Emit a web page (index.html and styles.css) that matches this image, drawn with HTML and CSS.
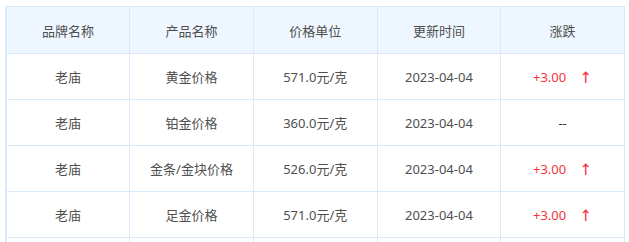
FILE: index.html
```html
<!DOCTYPE html>
<html lang="zh-CN">
<head>
<meta charset="utf-8">
<link rel="stylesheet" href="styles.css">
</head>
<body>
<table class="price-table">
  <thead>
    <tr><th>品牌名称</th><th>产品名称</th><th>价格单位</th><th>更新时间</th><th>涨跌</th></tr>
  </thead>
  <tbody>
    <tr><td>老庙</td><td>黄金价格</td><td>571.0元/克</td><td>2023-04-04</td><td class="up">+3.00<span class="arrow">↑</span></td></tr>
    <tr><td>老庙</td><td>铂金价格</td><td>360.0元/克</td><td>2023-04-04</td><td class="flat">--</td></tr>
    <tr><td>老庙</td><td>金条/金块价格</td><td>526.0元/克</td><td>2023-04-04</td><td class="up">+3.00<span class="arrow">↑</span></td></tr>
    <tr><td>老庙</td><td>足金价格</td><td>571.0元/克</td><td>2023-04-04</td><td class="up">+3.00<span class="arrow">↑</span></td></tr>
    <tr class="empty-row"><td></td><td></td><td></td><td></td><td></td></tr>
  </tbody>
</table>
</body>
</html>
```
FILE: styles.css
```css
html, body {
  margin: 0;
  padding: 0;
  background: #fff;
}
body {
  padding: 6px 4px 0 5px;
  overflow: hidden;
  height: 242px;
  box-sizing: border-box;
  font-family: "Noto Sans", "Noto Sans CJK SC", sans-serif;
  font-size: 13px;
  color: #4f4f4f;
}
.price-table {
  width: 620px;
  border-collapse: collapse;
  table-layout: fixed;
  border-left: 2px solid #dbe9fc;
}
.price-table th,
.price-table td {
  border: 1px solid #dbe9fc;
  text-align: center;
  font-weight: normal;
  padding: 0;
  height: 45px;
}
.price-table th {
  background: #eef6ff;
  height: 46px;
}
.up {
  color: #f5333f;
  padding-left: 4px;
}
.arrow {
  display: inline-block;
  margin-left: 13px;
  font-weight: bold;
}
.flat {
  color: #333;
}
```
